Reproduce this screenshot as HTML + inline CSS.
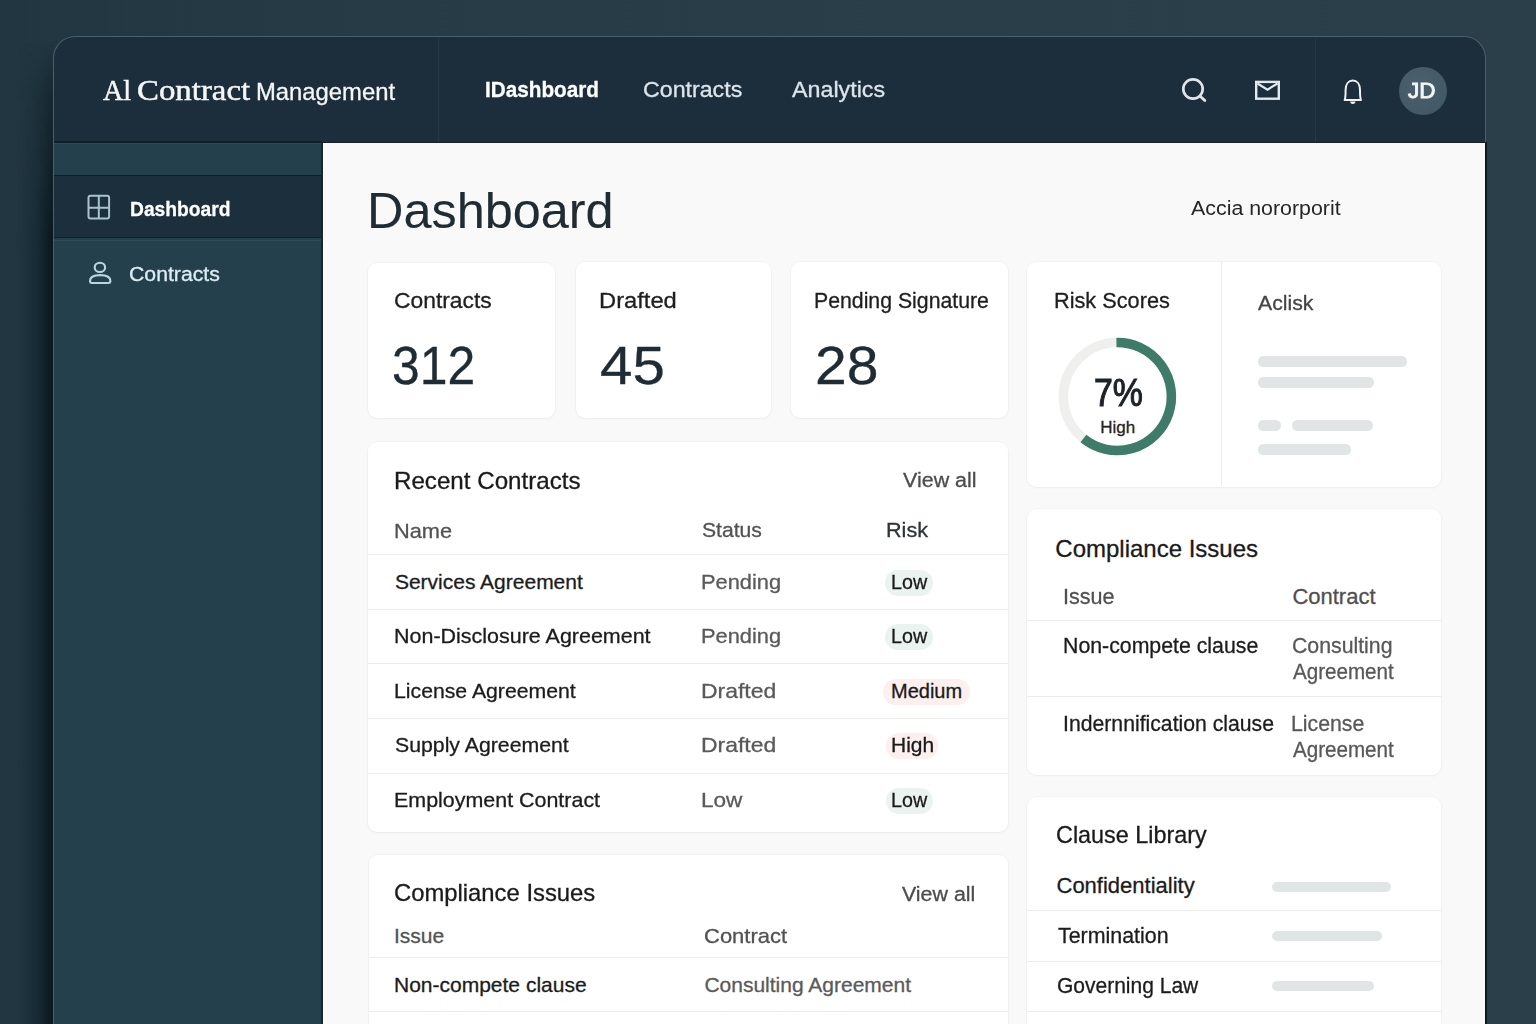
<!DOCTYPE html>
<html><head><meta charset="utf-8">
<style>
*{margin:0;padding:0;box-sizing:border-box}
html,body{width:1536px;height:1024px;overflow:hidden}
body{position:relative;font-family:"Liberation Sans",sans-serif;background:linear-gradient(90deg,#213641 0%,#273b46 25%,#2a3e49 60%,#2b3f4a 100%)}
.abs{position:absolute}
.t{position:absolute;white-space:nowrap;line-height:1;transform-origin:0 0;-webkit-text-stroke-width:0.3px}
.card{position:absolute;background:#fff;box-shadow:0 0 0 1px rgba(0,0,0,.018),0 1px 3px rgba(0,0,0,.04)}
</style></head><body>
<div class="abs" style="left:18px;top:40px;width:40px;height:1000px;background:linear-gradient(90deg,rgba(0,0,0,0),rgba(3,14,20,.3) 50%,rgba(2,12,18,.92));filter:blur(3px);-webkit-mask-image:linear-gradient(180deg,transparent 0,rgba(0,0,0,.5) 60px,#000 200px)"></div>
<div class="abs" style="left:53px;top:36px;width:1433px;height:1040px;border-radius:22px 22px 0 0;background:#1c2e3c;border:1px solid #4a606c;border-bottom:none"></div>
<div class="abs" style="left:1485px;top:142px;width:1.5px;height:882px;background:#0c1a21"></div>
<div class="abs" style="left:438px;top:37px;width:1px;height:105px;background:#263847"></div>
<div class="abs" style="left:1315px;top:37px;width:1px;height:105px;background:#263847"></div>
<div class="abs" style="left:1399px;top:66.5px;width:48px;height:48px;border-radius:50%;background:radial-gradient(circle at 40% 35%,#4a606d,#405663)"></div>
<div class="abs" style="left:54px;top:141px;width:268px;height:900px;background:#24404c"></div>
<div class="abs" style="left:54px;top:141px;width:268px;height:2px;background:#0f202a"></div>
<div class="abs" style="left:54px;top:143px;width:268px;height:1px;background:#2f4a57"></div>
<div class="abs" style="left:54px;top:175px;width:268px;height:63px;background:#1c2f3d;border-top:1.5px solid #0e1f29;border-bottom:1.5px solid #0f212b"></div>
<div class="abs" style="left:54px;top:239.5px;width:268px;height:1px;background:#2e4a57"></div>
<div class="abs" style="left:322px;top:142px;width:1163px;height:900px;background:#f9f9f9;border-top:1px solid #14222b"></div>
<div class="abs" style="left:321px;top:142px;width:1.5px;height:900px;background:#17262e"></div>
<div class="card" style="left:368px;top:262.5px;width:187px;height:155.5px;border-radius:9px"></div>
<div class="card" style="left:575.5px;top:262px;width:195.5px;height:156px;border-radius:9px"></div>
<div class="card" style="left:791px;top:262px;width:216.5px;height:156px;border-radius:9px"></div>
<div class="card" style="left:1027px;top:262px;width:414px;height:224.5px;border-radius:9px"></div>
<div class="card" style="left:368px;top:441.5px;width:640px;height:390.0px;border-radius:9px"></div>
<div class="card" style="left:368.5px;top:855px;width:639.0px;height:245px;border-radius:9px"></div>
<div class="card" style="left:1027px;top:508.5px;width:414px;height:266.5px;border-radius:9px"></div>
<div class="card" style="left:1027px;top:797px;width:414px;height:303px;border-radius:9px"></div>
<div class="abs" style="left:1221px;top:262px;width:1px;height:224px;background:#ececec"></div>
<div class="abs" style="left:368px;top:554.0px;width:640px;height:1px;background:#ececec"></div>
<div class="abs" style="left:368px;top:608.8px;width:640px;height:1px;background:#ececec"></div>
<div class="abs" style="left:368px;top:663.3px;width:640px;height:1px;background:#ececec"></div>
<div class="abs" style="left:368px;top:718.0px;width:640px;height:1px;background:#ececec"></div>
<div class="abs" style="left:368px;top:772.5px;width:640px;height:1px;background:#ececec"></div>
<div class="abs" style="left:368.5px;top:957.3px;width:639.0px;height:1px;background:#ececec"></div>
<div class="abs" style="left:368.5px;top:1011.4px;width:639.0px;height:1px;background:#ececec"></div>
<div class="abs" style="left:1027px;top:619.5px;width:414px;height:1px;background:#ececec"></div>
<div class="abs" style="left:1027px;top:696.0px;width:414px;height:1px;background:#ececec"></div>
<div class="abs" style="left:1027px;top:910.4px;width:414px;height:1px;background:#ececec"></div>
<div class="abs" style="left:1027px;top:960.5px;width:414px;height:1px;background:#ececec"></div>
<div class="abs" style="left:1027px;top:1011.2px;width:414px;height:1px;background:#ececec"></div>
<div class="abs" style="left:1257.8px;top:356.2px;width:149.0px;height:10.5px;border-radius:5.25px;background:#e1e5e6"></div>
<div class="abs" style="left:1258px;top:377.4px;width:115.8px;height:10.5px;border-radius:5.25px;background:#e1e5e6"></div>
<div class="abs" style="left:1258px;top:420.2px;width:22.5px;height:10.5px;border-radius:5.25px;background:#e1e5e6"></div>
<div class="abs" style="left:1292px;top:420.2px;width:81.0px;height:10.5px;border-radius:5.25px;background:#e1e5e6"></div>
<div class="abs" style="left:1258px;top:444.1px;width:92.6px;height:10.5px;border-radius:5.25px;background:#e1e5e6"></div>
<div class="abs" style="left:1272px;top:882.0px;width:119.0px;height:10px;border-radius:5.0px;background:#e1e5e6"></div>
<div class="abs" style="left:1272px;top:931.0px;width:109.7px;height:10px;border-radius:5.0px;background:#e1e5e6"></div>
<div class="abs" style="left:1272px;top:981.0px;width:102.0px;height:10px;border-radius:5.0px;background:#e1e5e6"></div>
<div class="abs" style="left:885px;top:569.8px;width:48.3px;height:26px;border-radius:13px;background:#eaf3ef"></div>
<div class="abs" style="left:885px;top:624.3px;width:48.3px;height:26px;border-radius:13px;background:#eaf3ef"></div>
<div class="abs" style="left:883px;top:678.8px;width:86.7px;height:26px;border-radius:13px;background:#fcefee"></div>
<div class="abs" style="left:885.7px;top:733.3px;width:52.1px;height:26px;border-radius:13px;background:#fcefee"></div>
<div class="abs" style="left:885.7px;top:787.8px;width:47.1px;height:26px;border-radius:13px;background:#eaf3ef"></div>

<svg class="abs" style="left:0;top:0" width="1536" height="1024">
<circle cx="1117.4" cy="396.5" r="54" fill="none" stroke="#efefed" stroke-width="9.5"/>
<path d="M1116.46,342.51 A54,54 0 1 1 1083.42,438.47" fill="none" stroke="#3f7b69" stroke-width="9.5" stroke-linecap="butt"/>
</svg>

<svg class="abs" style="left:0;top:0" width="1536" height="1024" fill="none">
<!-- search -->
<circle cx="1193" cy="89" r="9.7" stroke="#dfe5ea" stroke-width="2.7"/>
<path d="M1200.2 96.2 L1204.8 100.6" stroke="#dfe5ea" stroke-width="2.8" stroke-linecap="round"/>
<!-- mail -->
<rect x="1256.2" y="81.9" width="22.6" height="16.8" stroke="#e2e9ee" stroke-width="2.4"/>
<path d="M1257.5 83.5 L1267.5 89.6 L1277.5 83.5" stroke="#e2e9ee" stroke-width="2.2"/>
<!-- bell -->
<path d="M1344.6 100 C1345.5 98.6 1345.6 96 1345.6 90 C1345.6 84.2 1348.6 80.6 1352.8 80.6 C1357 80.6 1360 84.2 1360 90 C1360 96 1360.1 98.6 1361 100 Z" stroke="#eef2f4" stroke-width="2" stroke-linejoin="round"/>
<path d="M1350.2 101.6 A2.6 2.4 0 0 0 1355.4 101.6 Z" fill="#eef2f4"/>
<!-- sidebar grid -->
<rect x="88.5" y="195.8" width="20.6" height="22.8" rx="2" stroke="#a9c3cd" stroke-width="2"/>
<path d="M98.8 196 V218.5 M88.6 207.8 H109" stroke="#a9c3cd" stroke-width="2"/>
<!-- user -->
<ellipse cx="99.9" cy="267.4" rx="5.2" ry="4.6" stroke="#b9d6e0" stroke-width="2.1"/>
<path d="M92 283 L108.4 283 Q110.4 283 110.4 281 C110.4 277.3 106.4 275.1 100.2 275.1 C94 275.1 90 277.3 90 281 Q90 283 92 283 Z" stroke="#b9d6e0" stroke-width="2.1" stroke-linejoin="round"/>
</svg>

<div class="t" style="left:102.50px;top:75.10px;font-size:30px;color:#f4f6f7;font-weight:400;font-family:'Liberation Serif',serif;transform:scaleX(0.9367);-webkit-text-stroke-width:0.5px;">Al</div>
<div class="t" style="left:137.20px;top:75.10px;font-size:30px;color:#f4f6f7;font-weight:400;font-family:'Liberation Serif',serif;transform:scaleX(1.0951);-webkit-text-stroke-width:0.5px;">Contract</div>
<div class="t" style="left:256.01px;top:80.18px;font-size:24px;color:#f4f6f7;font-weight:400;font-family:'Liberation Sans',sans-serif;transform:scaleX(0.9928);">Management</div>
<div class="t" style="left:485.06px;top:79.38px;font-size:22px;color:#ffffff;font-weight:700;font-family:'Liberation Sans',sans-serif;transform:scaleX(0.9412);">IDashboard</div>
<div class="t" style="left:642.95px;top:79.38px;font-size:22px;color:#dbe5eb;font-weight:400;font-family:'Liberation Sans',sans-serif;transform:scaleX(1.0543);">Contracts</div>
<div class="t" style="left:792.00px;top:79.38px;font-size:22px;color:#dbe5eb;font-weight:400;font-family:'Liberation Sans',sans-serif;transform:scaleX(1.0575);">Analytics</div>
<div class="t" style="left:1408.40px;top:80.13px;font-size:22px;color:#f2f6f7;font-weight:400;font-family:'Liberation Sans',sans-serif;transform:scaleX(1.0231);-webkit-text-stroke-width:0.9px;">JD</div>
<div class="t" style="left:129.58px;top:198.42px;font-size:21px;color:#ffffff;font-weight:700;font-family:'Liberation Sans',sans-serif;transform:scaleX(0.9157);">Dashboard</div>
<div class="t" style="left:129.44px;top:264.07px;font-size:20px;color:#dcedf3;font-weight:400;font-family:'Liberation Sans',sans-serif;transform:scaleX(1.0619);">Contracts</div>
<div class="t" style="left:366.97px;top:185.98px;font-size:50px;color:#1f2c34;font-weight:400;font-family:'Liberation Sans',sans-serif;transform:scaleX(1.0084);-webkit-text-stroke-width:0.1px;">Dashboard</div>
<div class="t" style="left:1191.40px;top:197.97px;font-size:20px;color:#262626;font-weight:400;font-family:'Liberation Sans',sans-serif;transform:scaleX(1.0686);-webkit-text-stroke-width:0;">Accia nororporit</div>
<div class="t" style="left:393.96px;top:290.38px;font-size:22px;color:#1e1e1e;font-weight:400;font-family:'Liberation Sans',sans-serif;transform:scaleX(1.0380);">Contracts</div>
<div class="t" style="left:392.15px;top:337.59px;font-size:54px;color:#1f2c34;font-weight:400;font-family:'Liberation Sans',sans-serif;transform:scaleX(0.9235);">312</div>
<div class="t" style="left:599.14px;top:290.38px;font-size:22px;color:#1e1e1e;font-weight:400;font-family:'Liberation Sans',sans-serif;transform:scaleX(1.0783);">Drafted</div>
<div class="t" style="left:599.92px;top:337.59px;font-size:54px;color:#1f2c34;font-weight:400;font-family:'Liberation Sans',sans-serif;transform:scaleX(1.0789);">45</div>
<div class="t" style="left:814.47px;top:290.38px;font-size:22px;color:#1e1e1e;font-weight:400;font-family:'Liberation Sans',sans-serif;transform:scaleX(0.9663);">Pending Signature</div>
<div class="t" style="left:815.43px;top:337.59px;font-size:54px;color:#1f2c34;font-weight:400;font-family:'Liberation Sans',sans-serif;transform:scaleX(1.0564);">28</div>
<div class="t" style="left:1054.03px;top:289.98px;font-size:22px;color:#1e1e1e;font-weight:400;font-family:'Liberation Sans',sans-serif;transform:scaleX(0.9868);">Risk Scores</div>
<div class="t" style="left:1094.26px;top:373.29px;font-size:39px;color:#1c2227;font-weight:400;font-family:'Liberation Sans',sans-serif;transform:scaleX(0.8679);-webkit-text-stroke:1.1px #1c2227;">7%</div>
<div class="t" style="left:1100.30px;top:418.61px;font-size:17px;color:#222;font-weight:400;font-family:'Liberation Sans',sans-serif;">High</div>
<div class="t" style="left:1257.80px;top:292.02px;font-size:21px;color:#454545;font-weight:400;font-family:'Liberation Sans',sans-serif;transform:scaleX(1.0093);">Aclisk</div>
<div class="t" style="left:393.89px;top:469.48px;font-size:24px;color:#1a1a1a;font-weight:400;font-family:'Liberation Sans',sans-serif;transform:scaleX(1.0060);">Recent Contracts</div>
<div class="t" style="left:902.70px;top:470.07px;font-size:20px;color:#4d4d4d;font-weight:400;font-family:'Liberation Sans',sans-serif;transform:scaleX(1.0731);">View all</div>
<div class="t" style="left:393.83px;top:519.62px;font-size:21px;color:#525252;font-weight:400;font-family:'Liberation Sans',sans-serif;transform:scaleX(1.0358);">Name</div>
<div class="t" style="left:702.09px;top:519.02px;font-size:21px;color:#525252;font-weight:400;font-family:'Liberation Sans',sans-serif;transform:scaleX(1.0069);">Status</div>
<div class="t" style="left:886.24px;top:519.02px;font-size:21px;color:#2e3336;font-weight:400;font-family:'Liberation Sans',sans-serif;transform:scaleX(1.0289);">Risk</div>
<div class="t" style="left:394.90px;top:570.52px;font-size:21px;color:#1c1c1c;font-weight:400;font-family:'Liberation Sans',sans-serif;">Services Agreement</div>
<div class="t" style="left:700.92px;top:570.52px;font-size:21px;color:#5a5a5a;font-weight:400;font-family:'Liberation Sans',sans-serif;transform:scaleX(1.0397);">Pending</div>
<div class="t" style="left:393.86px;top:625.02px;font-size:21px;color:#1c1c1c;font-weight:400;font-family:'Liberation Sans',sans-serif;transform:scaleX(1.0225);">Non-Disclosure Agreement</div>
<div class="t" style="left:700.92px;top:625.02px;font-size:21px;color:#5a5a5a;font-weight:400;font-family:'Liberation Sans',sans-serif;transform:scaleX(1.0397);">Pending</div>
<div class="t" style="left:393.88px;top:679.52px;font-size:21px;color:#1c1c1c;font-weight:400;font-family:'Liberation Sans',sans-serif;transform:scaleX(1.0107);">License Agreement</div>
<div class="t" style="left:700.82px;top:679.52px;font-size:21px;color:#5a5a5a;font-weight:400;font-family:'Liberation Sans',sans-serif;transform:scaleX(1.0923);">Drafted</div>
<div class="t" style="left:394.89px;top:734.02px;font-size:21px;color:#1c1c1c;font-weight:400;font-family:'Liberation Sans',sans-serif;transform:scaleX(1.0123);">Supply Agreement</div>
<div class="t" style="left:700.82px;top:734.02px;font-size:21px;color:#5a5a5a;font-weight:400;font-family:'Liberation Sans',sans-serif;transform:scaleX(1.0923);">Drafted</div>
<div class="t" style="left:393.86px;top:788.52px;font-size:21px;color:#1c1c1c;font-weight:400;font-family:'Liberation Sans',sans-serif;transform:scaleX(1.0205);">Employment Contract</div>
<div class="t" style="left:700.85px;top:788.52px;font-size:21px;color:#5a5a5a;font-weight:400;font-family:'Liberation Sans',sans-serif;transform:scaleX(1.0750);">Low</div>
<div class="t" style="left:890.53px;top:571.87px;font-size:20px;color:#1a1a1a;font-weight:400;font-family:'Liberation Sans',sans-serif;transform:scaleX(0.9853);">Low</div>
<div class="t" style="left:890.53px;top:626.37px;font-size:20px;color:#1a1a1a;font-weight:400;font-family:'Liberation Sans',sans-serif;transform:scaleX(0.9853);">Low</div>
<div class="t" style="left:891.00px;top:680.87px;font-size:20px;color:#1a1a1a;font-weight:400;font-family:'Liberation Sans',sans-serif;">Medium</div>
<div class="t" style="left:890.91px;top:735.37px;font-size:20px;color:#1a1a1a;font-weight:400;font-family:'Liberation Sans',sans-serif;transform:scaleX(1.0474);">High</div>
<div class="t" style="left:890.53px;top:789.87px;font-size:20px;color:#1a1a1a;font-weight:400;font-family:'Liberation Sans',sans-serif;transform:scaleX(0.9853);">Low</div>
<div class="t" style="left:394.01px;top:880.68px;font-size:24px;color:#1a1a1a;font-weight:400;font-family:'Liberation Sans',sans-serif;transform:scaleX(0.9925);">Compliance Issues</div>
<div class="t" style="left:902.40px;top:883.67px;font-size:20px;color:#4d4d4d;font-weight:400;font-family:'Liberation Sans',sans-serif;transform:scaleX(1.0687);">View all</div>
<div class="t" style="left:394.00px;top:925.42px;font-size:21px;color:#525252;font-weight:400;font-family:'Liberation Sans',sans-serif;">Issue</div>
<div class="t" style="left:703.55px;top:925.42px;font-size:21px;color:#525252;font-weight:400;font-family:'Liberation Sans',sans-serif;transform:scaleX(1.0468);">Contract</div>
<div class="t" style="left:393.99px;top:973.62px;font-size:21px;color:#1c1c1c;font-weight:400;font-family:'Liberation Sans',sans-serif;">Non-compete clause</div>
<div class="t" style="left:704.40px;top:973.62px;font-size:21px;color:#5a5a5a;font-weight:400;font-family:'Liberation Sans',sans-serif;">Consulting Agreement</div>
<div class="t" style="left:1055.30px;top:537.18px;font-size:24px;color:#1a1a1a;font-weight:400;font-family:'Liberation Sans',sans-serif;">Compliance Issues</div>
<div class="t" style="left:1062.84px;top:585.58px;font-size:22px;color:#505050;font-weight:400;font-family:'Liberation Sans',sans-serif;transform:scaleX(0.9816);">Issue</div>
<div class="t" style="left:1292.40px;top:585.58px;font-size:22px;color:#505050;font-weight:400;font-family:'Liberation Sans',sans-serif;">Contract</div>
<div class="t" style="left:1062.86px;top:635.18px;font-size:22px;color:#1c1c1c;font-weight:400;font-family:'Liberation Sans',sans-serif;transform:scaleX(0.9678);">Non-compete clause</div>
<div class="t" style="left:1292.43px;top:635.18px;font-size:22px;color:#585858;font-weight:400;font-family:'Liberation Sans',sans-serif;transform:scaleX(0.9667);">Consulting</div>
<div class="t" style="left:1293.40px;top:660.68px;font-size:22px;color:#585858;font-weight:400;font-family:'Liberation Sans',sans-serif;transform:scaleX(0.9361);">Agreement</div>
<div class="t" style="left:1062.87px;top:713.08px;font-size:22px;color:#1c1c1c;font-weight:400;font-family:'Liberation Sans',sans-serif;transform:scaleX(0.9639);">Indernnification clause</div>
<div class="t" style="left:1291.47px;top:713.08px;font-size:22px;color:#585858;font-weight:400;font-family:'Liberation Sans',sans-serif;transform:scaleX(0.9671);">License</div>
<div class="t" style="left:1293.40px;top:738.58px;font-size:22px;color:#585858;font-weight:400;font-family:'Liberation Sans',sans-serif;transform:scaleX(0.9361);">Agreement</div>
<div class="t" style="left:1056.03px;top:823.48px;font-size:24px;color:#1a1a1a;font-weight:400;font-family:'Liberation Sans',sans-serif;transform:scaleX(0.9740);">Clause Library</div>
<div class="t" style="left:1056.50px;top:874.98px;font-size:22px;color:#1c1c1c;font-weight:400;font-family:'Liberation Sans',sans-serif;">Confidentiality</div>
<div class="t" style="left:1057.50px;top:925.08px;font-size:22px;color:#1c1c1c;font-weight:400;font-family:'Liberation Sans',sans-serif;transform:scaleX(0.9723);">Termination</div>
<div class="t" style="left:1056.55px;top:974.98px;font-size:22px;color:#1c1c1c;font-weight:400;font-family:'Liberation Sans',sans-serif;transform:scaleX(0.9544);">Governing Law</div>

</body></html>
